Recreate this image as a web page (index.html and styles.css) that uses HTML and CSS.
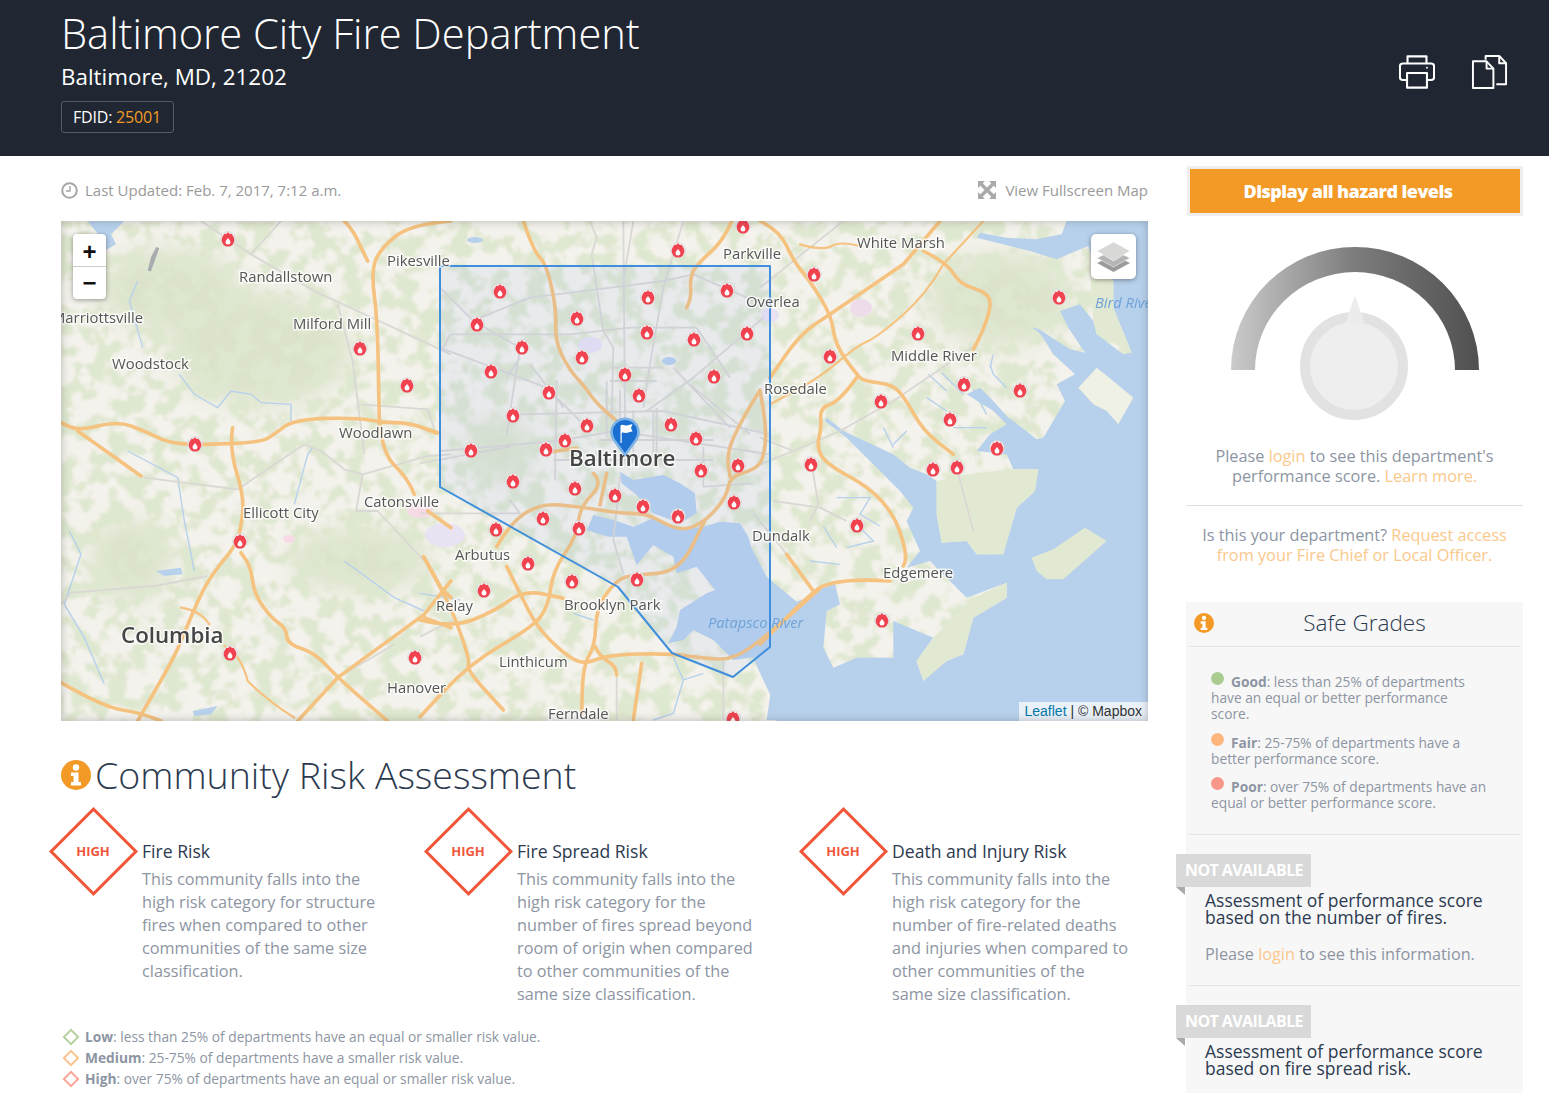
FILE: index.html
```html
<!DOCTYPE html>
<html lang="en">

<head>
	<meta charset="UTF-8">
	<title>Baltimore City Fire Department</title>
	<link rel="stylesheet" href="styles.css">
</head>

<body>
	<svg class="icon-defs" width="0" height="0">
		<defs>
			<symbol id="info" viewBox="0 0 30 30">
				<circle cx="15" cy="15" r="15" fill="#f39a26"/>
				<circle cx="15" cy="7.5" r="3.2" fill="#fff"/>
				<path d="M10 12.5h7.5v9.5H20v3.5H10V22h2.6v-6H10z" fill="#fff"/>
			</symbol>
		</defs>
	</svg>

	<header class="site-header">
		<div class="dept">
			<h1>Baltimore City Fire Department</h1>
			<div class="address">Baltimore, MD, 21202</div>
			<div class="fdid">FDID: <span>25001</span></div>
		</div>
		<div class="header-actions">
			<svg width="36" height="36" viewBox="0 0 38 38" fill="none" stroke="#fff" stroke-width="2.2" stroke-linejoin="round">
				<path d="M9 10V2.5h20V10"/>
				<path d="M8.5 27.5H4a3 3 0 0 1-3-3V13a3 3 0 0 1 3-3h30a3 3 0 0 1 3 3v11.500a3 3 0 0 1-3 3h-4.500"/>
				<rect x="8.500" y="20" width="21" height="15.500"/>
				<circle cx="29.500" cy="14.500" r="1" fill="#fff" stroke="none"/>
			</svg>
			<svg width="37" height="37" viewBox="0 0 38 38" fill="none" stroke="#fff" stroke-width="2" stroke-linejoin="round">
				<path d="M2 7.500h14l7 7.500v20H2z"/>
				<path d="M16 7.500V15h7"/>
				<path d="M15 6V2h14l7 7.500V31h-10"/>
				<path d="M29 2v7.500h7"/>
			</svg>
		</div>
	</header>

	<div class="layout">
		<main class="content">
			<div class="map-bar">
				<div class="updated">
					<svg width="17" height="17" viewBox="0 0 17 17" fill="none" stroke="#a5a5a5" stroke-width="2">
						<circle cx="8.500" cy="8.500" r="7.300"/>
						<path d="M9 4v5H5" stroke-width="1.400"/>
					</svg>
					Last Updated: Feb. 7, 2017, 7:12 a.m.
				</div>
				<div class="fullscreen">
					<svg width="18" height="18" viewBox="0 0 18 18" fill="#aaa">
						<path d="M0 0h7L0 7zM18 0v7L11 0zM0 18v-7l7 7zM18 18h-7l7-7z"/>
						<path d="M3 3L15 15M15 3L3 15" stroke="#aaa" stroke-width="3.400"/>
					</svg>
					View Fullscreen Map
				</div>
			</div>

			<div class="map">
				<svg class="map-canvas" width="1087" height="500" viewBox="61 221 1087 500">
					<defs>
						<filter id="mottle" x="0" y="0" width="100%" height="100%" color-interpolation-filters="sRGB">
							<feTurbulence type="fractalNoise" baseFrequency=".055" numOctaves="3" seed="7"/>
							<feColorMatrix values="0 0 0 0 .87  0 0 0 0 .905  0 0 0 0 .81  8 0 0 0 -3.700"/>
							<feGaussianBlur stdDeviation=".8"/>
						</filter>
						<filter id="soft"><feGaussianBlur stdDeviation="12"/></filter>
						<g id="pin">
							<circle r="7.500" fill="#efefef" stroke="#d2d2d2" stroke-width=".6"/>
							<g transform="scale(1.120)">
								<path d="M0-6.300C.8-4.600 2.500-4 3-5c.8 1.300 2.700 3 2.700 6a5.700 5.700 0 0 1-11.400 0c0-3 1.900-4.700 2.700-6C-2.500-4-.8-4.600 0-6.300z" fill="#f0424f"/>
								<path d="M0-1c.8 1.500 2.200 2.200 2.200 3.800a2.200 2.200 0 0 1-4.400 0C-2.200 1.200-.8.500 0-1z" fill="#fff"/>
							</g>
						</g>
					</defs>

					<rect x="61" y="221" width="1087" height="500" fill="#f4f2ec"/>
					<g filter="url(#soft)" fill="#d3dfbf" opacity=".75">
						<ellipse cx="260" cy="350" rx="90" ry="55"/>
						<ellipse cx="170" cy="290" rx="70" ry="40"/>
						<ellipse cx="360" cy="560" rx="70" ry="30"/>
						<ellipse cx="130" cy="560" rx="40" ry="40"/>
						<ellipse cx="1000" cy="300" rx="70" ry="45"/>
						<ellipse cx="500" cy="450" rx="30" ry="30"/>
					</g>
					<rect x="61" y="221" width="1087" height="500" filter="url(#mottle)"/>
					<g fill="#e8e2f2">
						<ellipse cx="590" cy="345" rx="12" ry="8"/>
						<ellipse cx="770" cy="315" rx="9" ry="7"/>
						<ellipse cx="861" cy="308" rx="11" ry="9" fill="#eedcea"/>
						<ellipse cx="420" cy="510" rx="13" ry="8" fill="#f6dbe6"/>
						<ellipse cx="445" cy="535" rx="20" ry="12"/>
						<ellipse cx="289" cy="539" rx="6" ry="4" fill="#f6dbe6"/>
					</g>

					<!-- water, traced from the bay on the right hand side -->
					<g transform="translate(760 221) scale(.33333)">
						<path class="water" d="M920 0L905 40L830 55L740 50L660 35L650 50L750 75L810 90L890 115L960 85L985 75L1000 130L1060 180L1060 260L1115 395L1090 400L1010 340L1000 300L960 250L900 270L925 320L975 395L930 385L830 320L880 400L945 460L890 490L915 540L850 650L830 655L760 600L745 590L700 540L660 500L620 520L700 570L740 610L690 640L650 690L740 700L760 745L835 745L825 810L770 860L730 1000L650 1000L620 960L545 965L530 880L530 780L500 760L450 740L400 700L250 630L200 590L195 600L260 650L330 720L420 810L460 860L440 900L480 990L440 1040L510 1020L620 1130L740 1085L740 1130L640 1190L610 1300L560 1320L490 1380L470 1320L520 1250L400 1200L400 1310L290 1310L220 1340L190 1280L200 1170L240 1150L225 1090L160 1110L0 1260L-30 1290L30 1420L50 1500L1164 1500L1164 0Z"/>
						<path class="land" d="M955 500L1010 440L1035 460L1120 530L1075 610L1040 570L1000 550Z"/>
						<path class="land-green" d="M815 1010L880 985L975 920L1040 960L910 1075L860 1075L830 1050Z"/>
						<path class="land-green" d="M530 780L620 760L760 745L835 745L825 810L770 860L730 1000L650 1000L620 960L545 965L530 880Z"/>
						<path class="land-green" d="M520 1250L640 1130L740 1085L740 1130L640 1190L610 1300L560 1320L490 1380L470 1320Z"/>
						<path class="land-green" d="M985 75L1000 130L1060 180L1060 260L1115 395L1010 340L1000 300Z"/>
						<path class="creek" d="M505 460L560 510M545 455L610 520M640 505L680 580M690 430L700 460L740 500M500 530L560 570M580 620L680 620M370 620L400 680M440 630L400 670M230 830L330 830L300 880L360 915M300 920L340 960L260 980M190 915L230 980M150 1020L240 1030M820 320L900 380M700 400L690 440"/>
					</g>
					<g transform="translate(420 380) scale(.33333)">
						<path class="water" d="M505 440L520 405L580 420L640 440L700 415L780 450L850 440L900 425L960 430L985 470L995 505L1040 590L1130 665L1200 640L1200 1020L1040 1020L1060 880L1010 830L940 840L880 780L820 750L790 780L745 790L770 740L780 690L860 640L885 630L830 560L770 580L760 530L700 495L650 555L620 470L565 470L500 450Z"/>
						<path class="water" d="M600 275L640 300L730 285L780 310L825 340L830 400L780 430L700 400L650 345L605 310Z"/>
						<path class="creek" d="M755 820L790 900L850 880M790 900L760 1000L700 1020M0 640L120 660M460 700L520 720"/>
					</g>
					<g transform="translate(61 221) scale(.33333)">
						<path class="water" d="M80 0L190 0L150 40L165 70L130 90L120 50Z"/>
						<path class="water" d="M285 1050L360 1040L365 1060L310 1065Z"/>
						<path class="water" d="M395 1470L470 1455L450 1480L400 1485Z"/>
						<path class="creek" d="M230 180L205 240L245 380M355 460L400 520L470 560L510 510L570 520L600 545L690 550L690 600M200 690L350 770L370 900L400 1050M850 1020L1000 1130L1090 1170M700 850L740 700L755 680M25 930L60 1000L10 1150L70 1250L130 1390"/>
						<path d="M290 80L265 150L275 110Z" fill="none" stroke="#a7acae" stroke-width="10"/>
					</g>
					<ellipse cx="475" cy="240" rx="8" ry="3" class="water"/>
					<ellipse cx="669" cy="361" rx="7" ry="4" class="water"/>

					<!-- minor roads -->
					<g transform="translate(61 221) scale(.33333)">
						<path class="road" d="M420 0L570 100L760 210L1170 400M570 100L660 0M250 770L530 805L730 670L780 690L850 745L905 760L1100 705L1170 700M905 760L885 870L950 870L1090 1020M0 1150L30 1115L280 1095L440 1065M830 250L875 420L910 700M900 550L1100 565L1125 640M830 1370L1000 1270"/>
					</g>
					<g transform="translate(430 221) scale(.33333)">
						<path class="road" d="M30 200L130 300L270 380L230 640M30 380L350 500L450 600M150 290L300 230L500 205L700 180L790 160L1020 260M40 380L60 340L240 340L420 340L600 320L800 320M480 0L500 50L485 100L520 330L550 380L545 600M580 0L585 600M610 0L580 180M760 0L700 200L660 430L640 560M1000 290L790 470L650 570M730 440L900 620M270 580L700 570L1020 640M30 690L380 660L560 630L1020 700M300 430L400 560M230 470L270 410M800 320L900 470M540 480L680 480M530 480L530 600M680 560L680 700M700 440L540 440M780 490L960 640"/>
					</g>
					<g transform="translate(420 380) scale(.33333)">
						<path class="road" d="M0 250L270 200M410 0L405 300M600 290L580 480L610 580M0 770L100 720M910 840L910 1020M590 860L590 1020M270 360L300 400L0 400M850 200L850 320L1000 310M1000 400L1090 510L1180 630M560 30L560 170M600 30L600 170M640 90L640 250M700 90L700 250M400 240L880 240M540 180L880 180"/>
					</g>
					<g transform="translate(760 221) scale(.33333)">
						<path class="road" d="M250 0L0 200M650 370L400 540L240 630L100 690L0 730M100 690L0 650M155 730L175 850L150 900M590 740L640 930M40 840L180 860L260 900"/>
					</g>

					<!-- main roads -->
					<g transform="translate(61 221) scale(.33333)">
						<path class="highway" d="M0 605L25 617Q50 630 110 615Q170 600 210 615Q250 630 285 647Q320 665 360 668Q400 672 500 668Q600 665 620 652Q640 640 670 617Q700 595 795 592Q890 590 925 597Q960 605 1000 605Q1040 605 1085 620L1130 635"/>
						<path class="highway" d="M515 620Q505 680 527 755Q550 830 545 875Q540 920 532 947Q525 975 482 1025Q440 1075 410 1142Q380 1210 360 1260Q340 1310 290 1395L230 1500"/>
						<path class="highway" d="M540 995L555 1017Q570 1040 575 1080Q580 1120 605 1155Q630 1190 652 1205Q675 1220 677 1245Q680 1270 720 1282Q760 1295 795 1332Q830 1370 905 1435L980 1500"/>
						<path class="highway" d="M710 1500L830 1370L1090 1180L1170 1080"/>
						<path class="highway" d="M0 1385Q130 1460 185 1467Q240 1475 300 1500"/>
						<path class="highway" d="M850 0Q880 30 900 80L920 120"/>
						<path class="highway" d="M1170 0Q1050 10 1005 45Q960 80 945 115Q930 150 940 225Q950 300 952 450L955 600Q965 700 1002 735Q1040 770 1060 820"/>
						<path class="highway" d="M1100 870L1170 920M1090 1010L1140 1100L1170 1130M1090 1190L1170 1220M50 630L240 765"/>
						<path class="highway thin" d="M360 1160Q420 1170 445 1210M490 1275Q540 1300 560 1380Q620 1440 700 1490"/>
					</g>
					<g transform="translate(430 221) scale(.33333)">
						<path class="highway" d="M280 0Q310 90 330 110Q350 130 365 200Q380 270 377 315Q375 360 397 405Q420 450 440 470Q460 490 480 520Q500 550 560 600"/>
						<path class="highway" d="M905 0Q880 60 840 95Q800 130 790 150Q780 170 782 200Q785 230 770 260"/>
					</g>
					<g transform="translate(420 380) scale(.33333)">
						<path class="highway" d="M0 140L50 160M395 215L470 205"/>
						<path class="highway" d="M230 500Q270 430 315 400Q360 370 420 375Q480 380 540 390Q600 400 640 400Q680 400 715 420Q750 440 775 445Q800 450 830 435Q860 420 890 385Q920 350 925 320Q930 290 965 280Q1000 270 1015 255Q1030 240 1035 195Q1040 150 1030 90L1020 30L990 80Q960 130 940 175Q920 220 925 255L930 290"/>
						<path class="highway" d="M540 375L560 280M520 280Q550 310 515 345Q480 380 475 425Q470 470 435 520Q400 570 392 625Q385 680 362 710Q340 740 245 795Q150 850 75 930L0 1010"/>
						<path class="highway" d="M10 530Q60 620 80 660Q100 700 125 770Q150 840 145 855Q140 870 195 930L250 990"/>
						<path class="highway" d="M0 720Q100 745 165 717Q230 690 270 660Q310 630 370 642L430 655"/>
						<path class="highway" d="M260 560Q300 640 325 690Q350 740 390 780Q430 820 460 837Q490 855 525 840Q560 825 655 822Q750 820 800 827Q850 835 895 837Q940 840 995 800Q1050 760 1125 692L1200 625"/>
						<path class="highway" d="M855 420L817 497Q780 575 710 580Q640 585 615 592Q590 600 560 640Q530 680 527 740Q525 800 507 827Q490 855 487 927L485 1000"/>
						<path class="highway" d="M525 800Q540 830 565 845Q590 860 590 885M665 850L640 1020"/>
					</g>
					<g transform="translate(760 221) scale(.33333)">
						<path class="highway" d="M0 0Q60 30 80 75Q100 120 125 150Q150 180 182 232Q215 285 220 327Q225 370 257 415Q290 460 300 470Q310 480 355 485Q400 490 420 515Q440 540 465 585Q490 630 535 665L580 700"/>
						<path class="highway" d="M30 470L75 405Q120 340 165 310L210 280L430 130L540 0"/>
						<path class="highway" d="M490 90Q560 125 580 157Q600 190 640 202Q680 215 687 232Q695 250 682 290Q670 330 640 385"/>
						<path class="highway thin" d="M120 70Q190 90 215 75Q240 60 300 75"/>
						<path class="highway thin" d="M670 0L550 130Q500 220 425 285Q350 350 320 362Q290 375 235 422Q180 470 105 510L30 550"/>
						<path class="highway" d="M290 470Q240 540 210 550Q180 560 182 590Q185 620 177 650Q170 680 185 705Q200 730 265 765Q330 800 365 840Q400 880 415 920Q430 960 435 990Q440 1020 430 1035"/>
						<path class="highway" d="M0 1270L80 1190Q160 1110 185 1097Q210 1085 260 1080Q310 1075 390 1080M80 1000L160 1110"/>
					</g>

					<path class="coverage" d="M440 266H770V647L733 677L672 653L667 647L618 587L440 487Z"/>

					<use href="#pin" x="228" y="239"/><use href="#pin" x="743" y="226"/><use href="#pin" x="678" y="250"/>
					<use href="#pin" x="814" y="274"/><use href="#pin" x="1059" y="297"/><use href="#pin" x="500" y="291"/>
					<use href="#pin" x="648" y="297"/><use href="#pin" x="727" y="290"/><use href="#pin" x="577" y="318"/>
					<use href="#pin" x="477" y="324"/><use href="#pin" x="647" y="332"/><use href="#pin" x="747" y="333"/>
					<use href="#pin" x="694" y="339"/><use href="#pin" x="522" y="347"/><use href="#pin" x="360" y="348"/>
					<use href="#pin" x="918" y="333"/><use href="#pin" x="830" y="356"/><use href="#pin" x="582" y="357"/>
					<use href="#pin" x="625" y="374"/><use href="#pin" x="714" y="376"/><use href="#pin" x="491" y="371"/>
					<use href="#pin" x="407" y="385"/><use href="#pin" x="549" y="392"/><use href="#pin" x="639" y="395"/>
					<use href="#pin" x="964" y="384"/><use href="#pin" x="1020" y="390"/><use href="#pin" x="881" y="401"/>
					<use href="#pin" x="513" y="415"/><use href="#pin" x="587" y="425"/><use href="#pin" x="950" y="419"/>
					<use href="#pin" x="671" y="424"/><use href="#pin" x="565" y="440"/><use href="#pin" x="696" y="438"/>
					<use href="#pin" x="471" y="450"/><use href="#pin" x="546" y="449"/><use href="#pin" x="195" y="444"/>
					<use href="#pin" x="997" y="448"/><use href="#pin" x="738" y="465"/><use href="#pin" x="701" y="470"/>
					<use href="#pin" x="811" y="464"/><use href="#pin" x="933" y="469"/><use href="#pin" x="957" y="467"/>
					<use href="#pin" x="513" y="481"/><use href="#pin" x="575" y="488"/><use href="#pin" x="615" y="495"/>
					<use href="#pin" x="643" y="506"/><use href="#pin" x="734" y="502"/><use href="#pin" x="678" y="516"/>
					<use href="#pin" x="543" y="518"/><use href="#pin" x="496" y="529"/><use href="#pin" x="579" y="528"/>
					<use href="#pin" x="857" y="525"/><use href="#pin" x="240" y="541"/><use href="#pin" x="528" y="563"/>
					<use href="#pin" x="572" y="581"/><use href="#pin" x="637" y="579"/><use href="#pin" x="484" y="590"/>
					<use href="#pin" x="882" y="620"/><use href="#pin" x="230" y="653"/><use href="#pin" x="415" y="657"/>
					<use href="#pin" x="733" y="718"/>

					<g class="place">
						<text x="387" y="266">Pikesville</text>
						<text x="723" y="259">Parkville</text>
						<text x="857" y="248">White Marsh</text>
						<text x="239" y="282">Randallstown</text>
						<text x="746" y="307">Overlea</text>
						<text x="293" y="329">Milford Mill</text>
						<text x="52" y="323">Marriottsville</text>
						<text x="112" y="369">Woodstock</text>
						<text x="891" y="361">Middle River</text>
						<text x="764" y="394">Rosedale</text>
						<text x="339" y="438">Woodlawn</text>
						<text x="364" y="507">Catonsville</text>
						<text x="243" y="518">Ellicott City</text>
						<text x="455" y="560">Arbutus</text>
						<text x="752" y="541">Dundalk</text>
						<text x="883" y="578">Edgemere</text>
						<text x="436" y="611">Relay</text>
						<text x="564" y="610">Brooklyn Park</text>
						<text x="499" y="667">Linthicum</text>
						<text x="387" y="693">Hanover</text>
						<text x="548" y="719">Ferndale</text>
					</g>
					<g class="place city">
						<text x="569" y="466">Baltimore</text>
						<text x="121" y="643">Columbia</text>
					</g>
					<g class="place river">
						<text x="708" y="628">Patapsco River</text>
						<text x="1095" y="308">Bird River</text>
					</g>

					<path d="M625 455L614 440a13.500 13.500 0 1 1 22 0z" fill="#1a6fd0" stroke="#7db3e6" stroke-width="2.500" stroke-linejoin="round"/>
					<path d="M620.500 443V425.500c2.500-2 4.500.5 6.500 0s4-1 5.500-1.500l-1.500 4 1.500 3.500c-2.500 0-4.500 1.500-6.500 1.500s-3.300-1-4.300 0v10z" fill="#fff"/>
				</svg>

				<div class="zoom-control">
					<div class="zoom-btn">+</div>
					<div class="zoom-btn">&minus;</div>
				</div>
				<div class="layers-btn">
					<svg width="35" height="32" viewBox="0 0 35 32">
						<path d="M17.500 14L34 22 17.500 31 1 22z" fill="#9b9b9b"/>
						<path d="M17.500 9L34 17 17.500 26 1 17z" fill="#b5b5b5" stroke="#fff" stroke-width=".5"/>
						<path d="M17.500 1L34 10 17.500 20 1 10z" fill="#d8d8d6" stroke="#fff" stroke-width=".5"/>
					</svg>
				</div>
				<div class="attribution"><a>Leaflet</a> | © Mapbox</div>
			</div>

			<h2 class="section-title">
				<svg class="info-lg" width="30" height="30"><use href="#info"/></svg>
				Community Risk Assessment
			</h2>

			<div class="risk-grid">
				<div class="risk-item">
					<div class="diamond"><span>HIGH</span></div>
					<div class="risk-text">
						<h3>Fire Risk</h3>
						<p>This community falls into the high risk category for structure fires when compared to other communities of the same size classification.</p>
					</div>
				</div>
				<div class="risk-item">
					<div class="diamond"><span>HIGH</span></div>
					<div class="risk-text">
						<h3>Fire Spread Risk</h3>
						<p>This community falls into the high risk category for the number of fires spread beyond room of origin when compared to other communities of the same size classification.</p>
					</div>
				</div>
				<div class="risk-item">
					<div class="diamond"><span>HIGH</span></div>
					<div class="risk-text">
						<h3>Death and Injury Risk</h3>
						<p>This community falls into the high risk category for the number of fire-related deaths and injuries when compared to other communities of the same size classification.</p>
					</div>
				</div>
			</div>

			<ul class="risk-legend">
				<li><i class="mini-diamond low"></i><b>Low</b>: less than 25% of departments have an equal or smaller risk value.</li>
				<li><i class="mini-diamond medium"></i><b>Medium</b>: 25-75% of departments have a smaller risk value.</li>
				<li><i class="mini-diamond high"></i><b>High</b>: over 75% of departments have an equal or smaller risk value.</li>
			</ul>
		</main>

		<aside class="sidebar">
			<button class="hazard-btn">Display all hazard levels</button>

			<svg class="gauge" width="337" height="190" viewBox="1186 240 337 190">
				<defs>
					<linearGradient id="gaugeFill" x1="0" x2="1" y1="0" y2="0">
						<stop offset="0" stop-color="#cbcbcb"/>
						<stop offset=".5" stop-color="#7c7c7c"/>
						<stop offset="1" stop-color="#505050"/>
					</linearGradient>
				</defs>
				<path d="M1231 370A124 123 0 0 1 1479 370H1455A100 98 0 0 0 1255 370Z" fill="url(#gaugeFill)"/>
				<circle cx="1354" cy="366" r="49" fill="#eee" stroke="#e2e2e2" stroke-width="10"/>
				<path d="M1355 295L1365 325Q1355 320 1345 325Z" fill="#ececec"/>
			</svg>

			<p class="side-note">Please <a>login</a> to see this department's performance score. <a>Learn more.</a></p>
			<p class="side-note access">Is this your department? <a>Request access from your Fire Chief or Local Officer.</a></p>

			<section class="grades">
				<div class="grades-head">
					<svg width="20" height="20"><use href="#info"/></svg>
					<h2>Safe Grades</h2>
				</div>
				<div class="grades-body">
					<p><i class="dot good"></i><b>Good</b>: less than 25% of departments have an equal or better performance score.</p>
					<p><i class="dot fair"></i><b>Fair</b>: 25-75% of departments have a better performance score.</p>
					<p><i class="dot poor"></i><b>Poor</b>: over 75% of departments have an equal or better performance score.</p>
				</div>
				<div class="score-block">
					<div class="ribbon">NOT AVAILABLE</div>
					<h4>Assessment of performance score based on the number of fires.</h4>
					<p>Please <a>login</a> to see this information.</p>
				</div>
				<div class="score-block">
					<div class="ribbon">NOT AVAILABLE</div>
					<h4>Assessment of performance score based on fire spread risk.</h4>
				</div>
			</section>
		</aside>
	</div>
</body>

</html>
```

FILE: styles.css
```css
html,
body {
	height: 1093px;
	overflow: hidden;
}

body {
	margin: 0;
	font-family: 'Open Sans', sans-serif;
	color: #8d95a3;
	background-color: white;
}

.icon-defs {
	position: absolute;
}

.site-header {
	height: 156px;
	box-sizing: border-box;
	background-color: #202732;
	color: white;
	padding: 7px 41px 0 61px;
	display: flex;
	justify-content: space-between;
}

h1 {
	margin: 0;
	font-size: 41.650px;
	font-weight: 300;
	line-height: 52px;
}

.address {
	font-size: 22.400px;
	line-height: 30px;
	margin-top: 3px;
}

.fdid {
	display: inline-block;
	margin-top: 9px;
	padding: 0 12px 0 11px;
	font-size: 16px;
	line-height: 30px;
	letter-spacing: -0.2px;
	border: 1px solid #555b66;
	border-radius: 3px;
}

.fdid span {
	color: #f39a26;
}

.header-actions {
	display: flex;
	gap: 36px;
	padding-top: 47px;
}

.layout {
	display: flex;
	gap: 38px;
	padding-left: 61px;
}

.content {
	width: 1087px;
	flex-shrink: 0;
}

.map-bar {
	display: flex;
	justify-content: space-between;
	align-items: center;
	height: 65px;
	box-sizing: border-box;
	padding-top: 3px;
	font-size: 15px;
	color: #9a9a9a;
}

.updated,
.fullscreen {
	display: flex;
	align-items: center;
	gap: 7px;
}

.fullscreen {
	gap: 9px;
}

.map {
	position: relative;
	height: 500px;
	overflow: hidden;
}

.map::after {
	content: "";
	position: absolute;
	inset: 0;
	box-shadow: inset 0 0 9px rgba(70, 70, 70, 0.35);
	pointer-events: none;
}

.map-canvas {
	display: block;
	filter: blur(0.4px);
}

.water {
	fill: #b7d1ec;
}

.land {
	fill: #eef1e4;
}

.land-green {
	fill: #e2e9d2;
}

.creek {
	fill: none;
	stroke: #b7d1ec;
	stroke-width: 1.400;
	vector-effect: non-scaling-stroke;
}

.road {
	fill: none;
	stroke: #d9d8d5;
	stroke-width: 1.800;
	stroke-linejoin: round;
	vector-effect: non-scaling-stroke;
}

.highway {
	fill: none;
	stroke: #f5c27f;
	stroke-width: 3.600;
	stroke-linejoin: round;
	stroke-linecap: round;
	vector-effect: non-scaling-stroke;
}

.highway.thin {
	stroke-width: 2.200;
}

.coverage {
	fill: rgba(120, 160, 245, 0.09);
	stroke: #3f8fdc;
	stroke-width: 2;
	stroke-linejoin: round;
}

.place text {
	font-size: 14.850px;
	fill: #565656;
	paint-order: stroke;
	stroke: rgba(255, 255, 255, 0.75);
	stroke-width: 3px;
}

.place.city text {
	font-size: 22.300px;
	font-weight: 600;
	fill: #454545;
}

.place.river text {
	font-size: 14.700px;
	font-style: italic;
	fill: #6fa3d8;
	stroke: none;
}

.zoom-control {
	position: absolute;
	top: 13px;
	left: 12px;
	width: 33px;
	background-color: white;
	border-radius: 4px;
	box-shadow: 0 1px 5px rgba(0, 0, 0, 0.4);
}

.zoom-btn {
	height: 32px;
	text-align: center;
	font-family: 'Liberation Sans', sans-serif;
	font-size: 24px;
	font-weight: bold;
	line-height: 32px;
	color: #111;
}

.zoom-btn:first-child {
	line-height: 36px;
}

.zoom-btn + .zoom-btn {
	border-top: 1px solid #ccc;
}

.layers-btn {
	position: absolute;
	top: 13px;
	right: 12px;
	width: 45px;
	height: 45px;
	display: flex;
	align-items: center;
	justify-content: center;
	background-color: white;
	border-radius: 5px;
	box-shadow: 0 1px 5px rgba(0, 0, 0, 0.4);
}

.attribution {
	position: absolute;
	right: 0;
	bottom: 0;
	padding: 0 6px;
	height: 19px;
	line-height: 19px;
	font-family: 'Liberation Sans', sans-serif;
	font-size: 14px;
	color: #333;
	background-color: rgba(255, 255, 255, 0.7);
}

.attribution a {
	color: #0078a8;
}

.section-title {
	display: flex;
	align-items: center;
	gap: 4px;
	margin: 26px 0 0;
	font-size: 37.500px;
	font-weight: 300;
	line-height: 56px;
	color: #2c3a4f;
}

.risk-grid {
	display: grid;
	grid-template-columns: repeat(3, 375px);
	margin: 4px 0 0 -12px;
}

.risk-item {
	display: flex;
	gap: 5px;
}

.diamond {
	position: relative;
	width: 88px;
	height: 88px;
	flex-shrink: 0;
	display: flex;
	align-items: center;
	justify-content: center;
	font-size: 13px;
	font-weight: 700;
	color: #f0563a;
}

.diamond::before {
	content: "";
	position: absolute;
	top: 12.500px;
	left: 12.500px;
	width: 57px;
	height: 57px;
	border: 3px solid #f0563a;
	transform: rotate(45deg);
}

.risk-text {
	padding-top: 32px;
	width: 237px;
}

.risk-text h3 {
	margin: 0;
	font-size: 17.600px;
	font-weight: 400;
	line-height: 24px;
	color: #2c3a4f;
}

.risk-text p {
	margin: 5px 0 0;
	font-size: 16.250px;
	line-height: 23px;
}

.risk-legend {
	list-style: none;
	margin: 20px 0 0;
	padding: 0;
	font-size: 13.750px;
	line-height: 21px;
}

.risk-legend li {
	display: flex;
	align-items: center;
	white-space: pre-wrap;
}

.mini-diamond {
	width: 12px;
	height: 12px;
	box-sizing: border-box;
	margin: 0 8px 0 4px;
	border: 2px solid;
	transform: rotate(45deg);
}

.mini-diamond.low {
	border-color: #b5d19e;
}

.mini-diamond.medium {
	border-color: #fbc28e;
}

.mini-diamond.high {
	border-color: #f9a698;
}

.sidebar {
	width: 337px;
	padding-top: 10px;
	flex-shrink: 0;
}

.hazard-btn {
	display: block;
	width: 336px;
	height: 50px;
	margin-left: 1px;
	padding: 0 14px 0 0;
	background-color: #f39a26;
	background-clip: padding-box;
	border: 3px solid #eee;
	font-family: 'Open Sans', sans-serif;
	font-size: 18px;
	font-weight: 800;
	letter-spacing: -0.55px;
	color: white;
}

.gauge {
	display: block;
	margin-top: 24px;
}

.side-note {
	margin: 16px 0 0;
	padding: 0 10px 19px;
	text-align: center;
	font-size: 16.300px;
	line-height: 20px;
}

.side-note a {
	color: #fbc88c;
}

.side-note.access {
	margin-top: 0;
	padding-top: 19px;
	padding-bottom: 37px;
	border-top: 1px solid #e0e0e0;
}

.grades {
	background-color: #f7f7f7;
	height: 500px;
}

.grades-head {
	position: relative;
	height: 44px;
	margin: 0 3px;
	display: flex;
	align-items: center;
	justify-content: center;
	border-bottom: 1px solid #e4e4e4;
}

.grades-head svg {
	position: absolute;
	left: 5px;
	top: 11px;
}

.grades-head h2 {
	margin: 0 0 4px 20px;
	font-size: 22.500px;
	font-weight: 300;
	color: #2c3a4f;
}

.grades-body {
	margin: 0 3px;
	padding: 25px 32.500px 22.600px 22px;
	border-bottom: 1px solid #e4e4e4;
	font-size: 13.750px;
	line-height: 16px;
}

.grades-body p {
	margin: 0 0 10.700px;
}

.grades-body p:last-child {
	margin-bottom: 0;
}

.dot {
	display: inline-block;
	width: 13px;
	height: 13px;
	margin-right: 7px;
	border-radius: 50%;
	vertical-align: 2px;
}

.dot.good {
	background-color: #a9cd90;
}

.dot.fair {
	background-color: #fdb67d;
}

.dot.poor {
	background-color: #f9968a;
}

.score-block {
	position: relative;
	margin: 0 3px;
	padding: 19px 0 20px 16px;
	border-bottom: 1px solid #e4e4e4;
}

.score-block:last-child {
	border-bottom: none;
}

.ribbon {
	width: 135px;
	height: 33px;
	box-sizing: border-box;
	margin-left: -29px;
	padding-left: 9px;
	background-color: #d9d9d9;
	font-size: 16px;
	font-weight: 700;
	letter-spacing: -0.6px;
	line-height: 33px;
	color: white;
	white-space: nowrap;
}

.ribbon::after {
	content: "";
	position: absolute;
	left: -13px;
	top: 52px;
	border-top: 8px solid #aaa;
	border-left: 9px solid transparent;
}

.score-block h4 {
	margin: 5px 0 0;
	font-size: 17.500px;
	font-weight: 400;
	line-height: 17px;
	color: #2c3a4f;
}

.score-block p {
	margin: 17px 0 0;
	font-size: 16.250px;
	line-height: 22px;
}

.score-block a {
	color: #fbc88c;
}
```
